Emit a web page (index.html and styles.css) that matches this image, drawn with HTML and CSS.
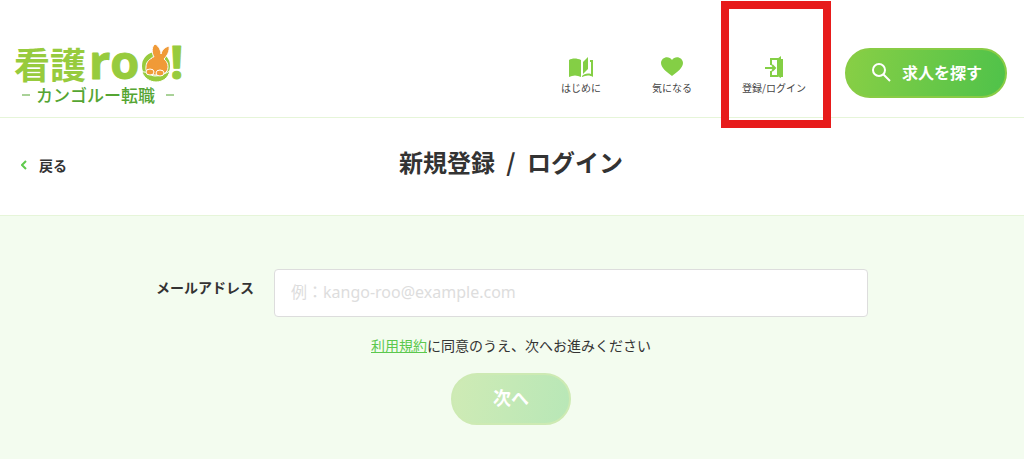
FILE: index.html
```html
<!DOCTYPE html>
<html lang="ja">
<head>
<meta charset="utf-8">
<meta name="viewport" content="width=device-width, initial-scale=1">
<title>新規登録 / ログイン</title>
<link rel="stylesheet" href="styles.css">
</head>
<body>
<header class="site-header">
  <a class="logo" href="#">
    <svg class="logo-art" width="172" height="64" viewBox="0 0 172 64">
      <text class="logo-kanji" x="-1" y="34">看護</text>
      <text class="logo-latin" x="74" y="34">ro</text>
      <circle cx="141" cy="21" r="11" fill="none" stroke="#97cb3d" stroke-width="6"/>
      <path d="M139 12C136 7 137 1 140-1c4 2 6 7 6 10 1-5 5-7 8-8 1 5-2 10-5 13 4 3 5 8 3 12-2 3-5 4-10 4-8 0-12-3-11-8 0-4 2-7 6-9 0-1 1-1 2-1z" fill="#f09a37" stroke="#fff"/>
      <path d="M127 27c5-1 8 4 13 4 6 0 9-2 15-5-2 7-7 11-14 11-6 0-12-4-14-10z" fill="#97cb3d" stroke="#fff"/>
      <ellipse cx="135" cy="27" rx="4" ry="3" fill="#f09a37" stroke="#fff"/>
      <ellipse cx="145" cy="28" rx="4" ry="3" fill="#f09a37" stroke="#fff"/>
      <text class="logo-latin" x="155" y="34">!</text>
      <path d="M7 50h8M151 50h8" stroke="#55a532" stroke-width="1"/>
      <text class="logo-sub" x="21" y="57">カンゴルー転職</text>
    </svg>
  </a>
  <nav class="nav">
    <a class="nav-item" href="#">
      <svg width="26" height="24" viewBox="0 0 26 24" fill="#84cf45">
        <path d="M1 4c3-2 8-2 12 0v17c-4-2-8-2-12 0z"/>
        <path d="M15 6l5-5v12l-5 5z"/>
        <path d="M22 4h3v17c-3-2-7-2-11 0v-1c2-2 5-3 9-2V6h-1z"/>
      </svg>
      <span>はじめに</span>
    </a>
    <a class="nav-item" href="#">
      <svg width="24" height="24" viewBox="0 0 24 24" fill="#84cf45">
        <path d="M12 20C7 16 1 12 1 7c0-6 8-8 11-3 3-5 11-3 11 3 0 5-6 9-11 13z"/>
      </svg>
      <span>気になる</span>
    </a>
    <a class="nav-item nav-item-marked" href="#">
      <svg width="24" height="24" viewBox="0 0 24 24">
        <path d="M9 9V3h7M9 15v5h7" fill="none" stroke="#84cf45" stroke-width="2"/>
        <path d="M15 3l4-3v3h2v18h-2v1l-4-2z" fill="#84cf45"/>
        <path d="M3 12h10M10 9l3 3-3 3" fill="none" stroke="#84cf45" stroke-width="2"/>
      </svg>
      <span>登録/ログイン</span>
    </a>
  </nav>
  <button class="pill search" type="button">
    <svg width="20" height="20" viewBox="0 0 20 20" fill="none" stroke="#fff" stroke-width="2">
      <circle cx="7" cy="8" r="6"/><path d="M11 12l7 7"/>
    </svg>
    求人を探す
  </button>
</header>
<div class="title-bar">
  <a class="back" href="#">
    <svg width="6" height="10" viewBox="0 0 6 10" fill="none" stroke="#5fca4c" stroke-width="2"><path d="M5 1L1 5l4 4"/></svg>
    戻る
  </a>
  <h1 class="title">新規登録 <span class="slash">/</span> ログイン</h1>
</div>
<main class="main">
  <form class="form">
    <div class="field">
      <label class="label" for="email">メールアドレス</label>
      <input class="input" id="email" type="email" placeholder="例：kango-roo@example.com">
    </div>
    <p class="terms"><a href="#">利用規約</a>に同意のうえ、次へお進みください</p>
    <button class="pill next" type="submit" disabled>次へ</button>
  </form>
</main>
</body>
</html>
```
FILE: styles.css
```css
* { box-sizing: border-box; }

body {
  margin: 0;
  min-height: 100vh;
  display: flex;
  flex-direction: column;
  background: #fff;
  color: #333;
  font-family: "Noto Sans CJK JP", sans-serif;
  font-size: 14px;
  line-height: 20px;
}

a { color: inherit; text-decoration: none; }
svg { display: block; flex: none; }

.site-header {
  display: flex;
  align-items: center;
  padding: 29px 17px 0 15px;
  min-height: 118px;
  border-bottom: 1px solid #e6f5d9;
}

.logo { padding-top: 8px; }

.logo-art { overflow: visible; }

.logo-kanji {
  font-size: 36px;
  font-weight: 700;
  fill: #97cb3d;
}

.logo-latin {
  font-family: "Open Sans", sans-serif;
  font-size: 47px;
  font-weight: 700;
  fill: #97cb3d;
  stroke: #97cb3d;
  stroke-width: 1px;
  stroke-linejoin: round;
}

.logo-sub {
  font-size: 17px;
  font-weight: 500;
  fill: #55a532;
}

.nav {
  display: flex;
  gap: 49px;
  margin: 0 39px 0 auto;
}

.nav-item {
  position: relative;
  display: flex;
  flex-direction: column;
  align-items: center;
  padding-top: 6px;
  min-width: 42px;
  color: #444;
  font-size: 10px;
  line-height: 16px;
  white-space: nowrap;
}

.nav-item-marked::after {
  content: "";
  position: absolute;
  inset: -49px -25px -32px -21px;
  border: 8px solid #e71b1b;
  pointer-events: none;
}

.pill {
  display: flex;
  align-items: center;
  justify-content: center;
  border: 2px solid #88cc45;
  border-radius: 32px;
  background: linear-gradient(100deg, #88cf45, #4fc24a);
  color: #fff;
  font-family: inherit;
  font-weight: 700;
}

.search {
  gap: 10px;
  padding: 10px 23px 12px 25px;
  font-size: 16px;
  line-height: 24px;
}

.title-bar {
  display: grid;
  grid-template-columns: 1fr auto 1fr;
  align-items: center;
  padding: 26px 23px 35px 21px;
  border-bottom: 1px solid #e6f5d9;
}

.back {
  display: flex;
  align-items: center;
  gap: 12px;
  padding-top: 6px;
  font-weight: 700;
}

.title {
  margin: 0;
  font-size: 24px;
  line-height: 36px;
  font-weight: 700;
}

.slash { margin: 0 6px; }

.main {
  flex: 1;
  padding: 53px 26px 34px 24px;
  background: #f3fcef;
}

.form {
  display: flex;
  flex-direction: column;
  align-items: center;
  max-width: 714px;
  margin: 0 auto;
}

.field {
  display: flex;
  gap: 20px;
  width: 100%;
}

.label {
  flex: none;
  padding-top: 8px;
  min-width: 100px;
  text-align: right;
  font-weight: 700;
}

.input {
  flex: 1;
  min-width: 0;
  height: 48px;
  padding: 0 16px 2px;
  border: 1px solid #ddd;
  border-radius: 4px;
  background: #fff;
  color: #333;
  font-family: "Noto Sans", "Noto Sans CJK JP", sans-serif;
  font-size: 16px;
}

.input::placeholder { color: #ddd; }

.terms { margin: 18px 0; }

.terms a {
  color: #5bc84d;
  text-decoration: underline;
}

.next {
  min-width: 120px;
  padding: 10px 24px 14px;
  font-size: 18px;
  line-height: 24px;
  border-color: #cdeab3;
  background: linear-gradient(100deg, #cfebb5, #b8e7b7);
}
```
